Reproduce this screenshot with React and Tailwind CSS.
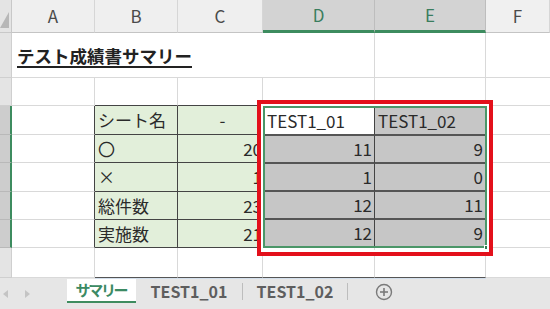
import React from "react";

const hdr = "flex items-center justify-center text-[17px] border-r border-b";
const gl = "border-r border-b border-[#d9d9d9]";

function Corner() {
  return (
    <div className="bg-[#e4e4e4] border-r border-b border-[#c8c8c8] flex items-end justify-start">
      <svg width="11" height="32" viewBox="0 0 11 32">
        <polygon points="9,12 9,28 0,28" fill="#b7b7b7" />
      </svg>
    </div>
  );
}

function RowHdr({ sel }) {
  return sel ? (
    <div className="bg-[#cdcdcd] border-b border-[#b9b9b9] border-r-2 border-r-[#3d8c5f]" />
  ) : (
    <div className="bg-[#e4e4e4] border-b border-r border-[#cfcfcf]" />
  );
}

export default function App() {
  const rows = [
    ["シート名", "-", "TEST1_01", "TEST1_02"],
    ["〇", "20", "11", "9"],
    ["×", "1", "1", "0"],
    ["総件数", "23", "12", "11"],
    ["実施数", "21", "12", "9"],
  ];
  return (
    <div className="w-[550px] h-[309px] overflow-hidden bg-white relative font-['Noto_Sans_CJK_JP',sans-serif] text-[#2a2a2a]">
      <div className="grid grid-cols-[12px_83px_83px_85px_112px_111px_64px] grid-rows-[33px_45px_28px_29px_28px_29px_28px_28px_30px]">
        {/* header */}
        <Corner />
        <div className={`${hdr} bg-[#efefef] text-[#4a4a4a] border-r-[#d6d6d6] border-b-[#c4c4c4]`}>A</div>
        <div className={`${hdr} bg-[#efefef] text-[#4a4a4a] border-r-[#d6d6d6] border-b-[#c4c4c4]`}>B</div>
        <div className={`${hdr} bg-[#efefef] text-[#4a4a4a] border-r-[#d6d6d6] border-b-[#c4c4c4]`}>C</div>
        <div className="flex items-center justify-center text-[17px] bg-[#d3d3d3] text-[#3a7d5e] border-r border-r-[#bdbdbd] border-b-[3px] border-b-[#3d8c5f]">D</div>
        <div className="flex items-center justify-center text-[17px] bg-[#d3d3d3] text-[#3a7d5e] border-r border-r-[#bdbdbd] border-b-[3px] border-b-[#3d8c5f]">E</div>
        <div className={`${hdr} bg-[#f0f0f0] text-[#4a4a4a] border-r-[#d6d6d6] border-b-[#c4c4c4]`}>F</div>

        {/* row 1 title */}
        <RowHdr />
        <div className="col-span-3 border-b border-[#d9d9d9] flex items-center pl-[5px] pt-[1px]">
          <span className="text-[17.5px] font-bold underline underline-offset-[3px] decoration-[1.5px] text-[#222] leading-none">
            テスト成績書サマリー
          </span>
        </div>
        <div className={gl} />
        <div className={gl} />
        <div className="border-b border-[#d9d9d9]" />

        {/* row 2 */}
        <RowHdr />
        <div className={gl} />
        <div className="border-r border-[#d9d9d9] border-b border-b-[#444]" />
        <div className="border-r border-[#d9d9d9] border-b border-b-[#444]" />
        <div className={gl} />
        <div className={gl} />
        <div className="border-b border-[#d9d9d9]" />

        {/* rows 3-7 */}
        {rows.map((r, i) => (
          <React.Fragment key={i}>
            <div className="col-start-1" style={{ gridRow: i + 4 }}>
              <div className="h-full bg-[#cdcdcd] border-b border-[#b9b9b9] border-r-2 border-r-[#3d8c5f]" />
            </div>
            <div className="col-start-2 border-b border-[#d9d9d9] border-r border-r-[#444]" style={{ gridRow: i + 4 }} />
            <div className="col-start-3 bg-[#e2efda] border-r border-b border-[#444] flex items-center pl-[3px] text-[17px]" style={{ gridRow: i + 4 }}>
              {r[0]}
            </div>
            <div
              className={`col-start-4 bg-[#e2efda] border-b border-[#444] flex items-center text-[17px] ${
                i === 0 ? "justify-center pl-[4px]" : "justify-end pr-[1px]"
              }`}
              style={{ gridRow: i + 4 }}
            >
              {r[1]}
            </div>
            <div className="col-start-7 border-b border-[#d9d9d9]" style={{ gridRow: i + 4 }} />
          </React.Fragment>
        ))}

        {/* selected range D3:E7 */}
        <div className="col-start-5 col-span-2 row-start-4 row-span-5 relative border-2 border-[#4b9668] -mr-[1px]">
          <div className="grid grid-cols-[110px_1fr] grid-rows-[28px_28px_28px_28px_1fr] h-full">
            {rows.map((r, i) => (
              <React.Fragment key={i}>
                <div
                  className={`${i === 0 ? "bg-white justify-start pl-[2px]" : "bg-[#c6c6c6] justify-end pr-[2px]"} flex items-center text-[17px] border-r border-r-[#444] ${
                    i < 4 ? "border-b-2 border-b-[#555]" : ""
                  }`}
                >
                  {r[2]}
                </div>
                <div
                  className={`bg-[#c6c6c6] flex items-center text-[17px] ${i === 0 ? "justify-start pl-[3px]" : "justify-end pr-[2px]"} ${
                    i < 4 ? "border-b-2 border-b-[#555]" : ""
                  }`}
                >
                  {r[3]}
                </div>
              </React.Fragment>
            ))}
          </div>
          <div className="absolute -right-[4px] -bottom-[4px] w-[5px] h-[5px] bg-[#2f7a4f] border border-white" />
        </div>

        {/* row 8 */}
        <RowHdr />
        <div className={gl} />
        <div className="border-r border-[#d9d9d9] border-b border-b-[#555]" />
        <div className="border-r border-[#d9d9d9] border-b border-b-[#555]" />
        <div className="border-r border-[#d9d9d9] border-b border-b-[#555]" />
        <div className="border-r border-[#d9d9d9] border-b border-b-[#555]" />
        <div className="border-b border-[#d9d9d9]" />
      </div>

      {/* sheet tabs */}
      <div className="h-[31px] bg-[#e6e6e6] flex flex-col">
        <div className="h-[3px] flex">
          <div className="w-[95px]" />
          <div className="w-[391px] bg-[#d3dfec]" />
        </div>
        <div className="flex-1 flex items-start">
          <div className="w-[67px] h-full flex items-center gap-[16px] pl-[3px] text-[#c2c2c2]">
            <svg width="6" height="8" viewBox="0 0 6 8"><polygon points="5,0 5,8 0,4" fill="#c4c4c4" /></svg>
            <svg width="6" height="8" viewBox="0 0 6 8"><polygon points="0,0 0,8 5,4" fill="#c4c4c4" /></svg>
          </div>
          <div className="w-[69px] h-[24px] bg-white border-b-2 border-[#3d8c5f] flex items-center justify-center text-[15px] font-bold text-[#3b8a63] tracking-[-1px] [font-feature-settings:'palt']">
            サマリー
          </div>
          <div className="w-[106px] h-full flex items-center justify-center text-[16px] font-bold text-[#5e5e5e] pb-[6px]">
            TEST1_01
          </div>
          <div className="w-px h-[17px] bg-[#bdbdbd] mt-[4px]" />
          <div className="w-[104px] h-full flex items-center justify-center text-[16px] font-bold text-[#5e5e5e] pb-[6px]">
            TEST1_02
          </div>
          <div className="w-px h-[17px] bg-[#bdbdbd] mt-[4px]" />
          <div className="ml-[27px] mt-[4px]">
            <svg width="18" height="18" viewBox="0 0 18 18">
              <circle cx="9" cy="9" r="7.5" fill="none" stroke="#7a7a7a" strokeWidth="1.4" />
              <line x1="9" y1="5" x2="9" y2="13" stroke="#7a7a7a" strokeWidth="1.6" />
              <line x1="5" y1="9" x2="13" y2="9" stroke="#7a7a7a" strokeWidth="1.6" />
            </svg>
          </div>
        </div>
      </div>

      {/* red annotation */}
      <div className="absolute left-[257px] top-[100px] w-[236px] h-[156px] border-4 border-[#e3101b] shadow-[inset_0_0_0_2px_white] pointer-events-none" />
    </div>
  );
}
